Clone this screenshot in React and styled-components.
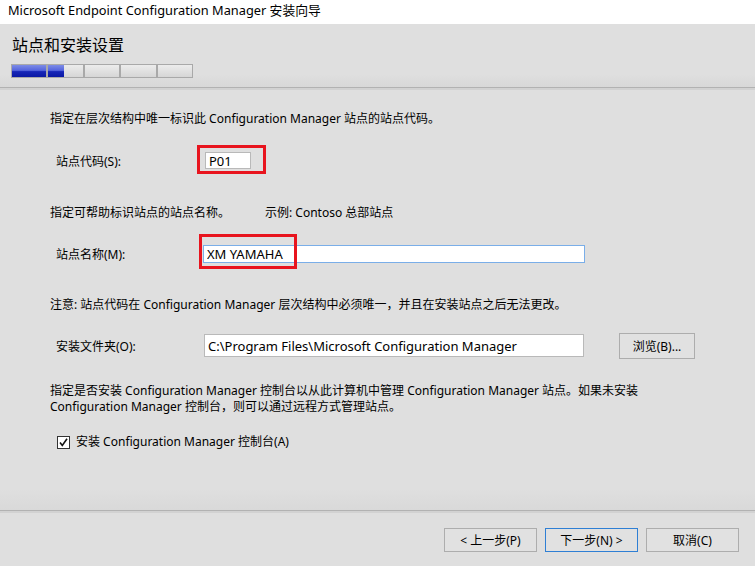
import React from "react";
import styled, { createGlobalStyle } from "styled-components";

const GlobalStyle = createGlobalStyle`
  html, body {
    margin: 0;
    padding: 0;
    background: #dfdfdf;
  }
  body {
    font-family: "Noto Sans", "Noto Sans CJK SC", sans-serif;
    font-size: 12px;
    color: #000;
  }
`;

const steps = [100, 45, 0, 0, 0];

const App = () => {
  return (
    <Window>
      <GlobalStyle />
      <TitleBar>Microsoft Endpoint Configuration Manager 安装向导</TitleBar>
      <Header>
        <HeaderTitle>站点和安装设置</HeaderTitle>
        <Progress>
          {steps.map((pct, i) => (
            <Segment key={i}>
              <Fill $pct={pct} />
            </Segment>
          ))}
        </Progress>
      </Header>
      <Divider />
      <Body>
        <Text $mt={21}>指定在层次结构中唯一标识此 Configuration Manager 站点的站点代码。</Text>
        <Row $mt={20}>
          <Label>站点代码(S):</Label>
          <FieldBox $ml={2}>
            <Input $w={46} $h={17} readOnly defaultValue="P01" />
            <Highlight $l={-8} $t={-7} $w={69} $h={29} />
          </FieldBox>
        </Row>
        <Text $mt={31}>
          <Lead>指定可帮助标识站点的站点名称。</Lead>
          示例: Contoso 总部站点
        </Text>
        <Row $mt={19}>
          <Label>站点名称(M):</Label>
          <FieldBox>
            <Input $w={382} $h={18} $focus readOnly defaultValue="XM YAMAHA" />
            <Highlight $l={-4} $t={-11} $w={98} $h={35} />
          </FieldBox>
        </Row>
        <Text $mt={30}>
          注意: 站点代码在 Configuration Manager 层次结构中必须唯一，并且在安装站点之后无法更改。
        </Text>
        <Row $mt={19}>
          <Label>安装文件夹(O):</Label>
          <FieldBox $ml={1}>
            <Input
              $w={380}
              $h={23}
              readOnly
              defaultValue="C:\Program Files\Microsoft Configuration Manager"
            />
          </FieldBox>
          <Button $w={76} $h={26} $ml={35}>浏览(B)...</Button>
        </Row>
        <Paragraph>
          指定是否安装 Configuration Manager 控制台以从此计算机中管理 Configuration Manager 站点。如果未安装
          <br />
          Configuration Manager 控制台，则可以通过远程方式管理站点。
        </Paragraph>
        <CheckRow>
          <Box>
            <svg width="11" height="11" viewBox="0 0 11 11">
              <path d="M2 5.5 L4.3 8.5 L9 1.8" fill="none" stroke="#111" strokeWidth="1.6" />
            </svg>
          </Box>
          安装 Configuration Manager 控制台(A)
        </CheckRow>
      </Body>
      <Divider />
      <Footer>
        <Button $w={93} $h={24}>&lt; 上一步(P)</Button>
        <Button $w={93} $h={24} $primary>下一步(N) &gt;</Button>
        <Button $w={93} $h={24}>取消(C)</Button>
      </Footer>
    </Window>
  );
};

export default App;

const Window = styled.div`
  width: 755px;
  height: 566px;
  display: flex;
  flex-direction: column;
  background: #dfdfdf;
  overflow: hidden;
`;

const TitleBar = styled.div`
  height: 24px;
  background: #fff;
  padding-left: 8px;
  font-size: 12.8px;
  line-height: 21px;
  white-space: nowrap;
`;

const Header = styled.div`
  height: 63px;
  box-sizing: border-box;
  padding: 11px 0 0 11px;
  background: linear-gradient(#dfdfdf 0%, #dfdfdf 80%, #d8d8d8 100%);
`;

const HeaderTitle = styled.div`
  font-size: 16px;
  line-height: 20px;
  padding-left: 1px;
`;

const Progress = styled.div`
  display: flex;
  width: 182px;
  height: 14px;
  margin-top: 9px;
`;

const Segment = styled.div`
  flex: 1;
  position: relative;
  border: 1px solid #a9a9a9;
  background: linear-gradient(#ececec, #d6d6d6);
  overflow: hidden;
`;

const Fill = styled.div`
  width: ${(p) => p.$pct}%;
  height: 100%;
  background: linear-gradient(#7d8ce6 0%, #5565de 45%, #1626b8 55%, #0a18a4 100%);
`;

const Divider = styled.div`
  height: 3px;
  border-top: 1px solid #b2b2b2;
  background: #d2d2d2;
  box-sizing: border-box;
`;

const Body = styled.div`
  flex: 1;
  padding-left: 50px;
  background: linear-gradient(#dfdfdf 0%, #dfdfdf 95%, #d9d9d9 100%);
`;

const Text = styled.div`
  margin-top: ${(p) => p.$mt}px;
  line-height: 16px;
  white-space: nowrap;
  display: flex;
`;

const Lead = styled.span`
  width: 215px;
`;

const Row = styled.div`
  margin-top: ${(p) => p.$mt}px;
  height: 27px;
  display: flex;
  align-items: center;
  padding-left: 6px;
`;

const Label = styled.div`
  width: 147px;
`;

const FieldBox = styled.div`
  position: relative;
  margin-left: ${(p) => p.$ml || 0}px;
  display: flex;
`;

const Input = styled.input`
  width: ${(p) => p.$w}px;
  height: ${(p) => p.$h}px;
  box-sizing: border-box;
  border: 1px solid ${(p) => (p.$focus ? "#7aaee8" : "#b9b9b9")};
  background: #fff;
  font-family: "Noto Sans", "Noto Sans CJK SC", sans-serif;
  font-size: 13px;
  color: #000;
  padding: 0 0 0 3px;
  margin: 0;
  outline: none;
`;

const Highlight = styled.div`
  position: absolute;
  left: ${(p) => p.$l}px;
  top: ${(p) => p.$t}px;
  width: ${(p) => p.$w}px;
  height: ${(p) => p.$h}px;
  box-sizing: border-box;
  border: 3px solid #e8141e;
  pointer-events: none;
`;

const Button = styled.button`
  width: ${(p) => p.$w}px;
  height: ${(p) => p.$h}px;
  margin-left: ${(p) => p.$ml || 0}px;
  box-sizing: border-box;
  border: 1px solid ${(p) => (p.$primary ? "#2f7fd4" : "#adadad")};
  background: #e1e1e1;
  font-family: "Noto Sans", "Noto Sans CJK SC", sans-serif;
  font-size: 12px;
  color: #000;
  padding: 0;
`;

const Paragraph = styled.div`
  margin-top: 24px;
  line-height: 16px;
  white-space: nowrap;
`;

const CheckRow = styled.div`
  margin-top: 19px;
  display: flex;
  align-items: center;
  gap: 6px;
  padding-left: 7px;
  line-height: 16px;
`;

const Box = styled.div`
  width: 13px;
  height: 13px;
  box-sizing: border-box;
  border: 1px solid #333;
  background: #fff;
  display: flex;
  align-items: center;
  justify-content: center;
`;

const Footer = styled.div`
  height: 53px;
  display: flex;
  justify-content: flex-end;
  gap: 8px;
  padding: 15px 16px 0 0;
  box-sizing: border-box;
`;
